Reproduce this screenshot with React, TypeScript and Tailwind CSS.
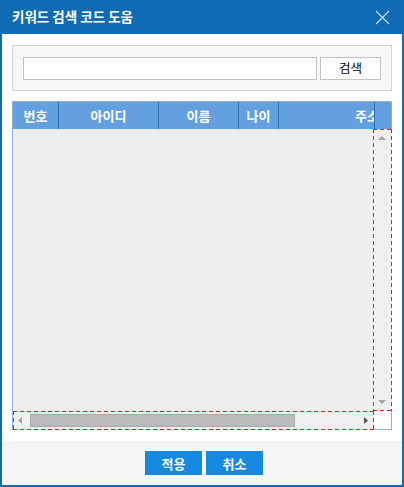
import React from "react";

const font = { fontFamily: '"Noto Sans CJK KR", "Noto Sans", sans-serif' };

const dashed =
  "[background-image:linear-gradient(90deg,#e41b1b_4px,transparent_4px),linear-gradient(90deg,#e41b1b_4px,transparent_4px),linear-gradient(180deg,#e41b1b_4px,transparent_4px),linear-gradient(180deg,#e41b1b_4px,transparent_4px)] [background-size:7px_1px,7px_1px,1px_7px,1px_7px] [background-position:0_0,0_100%,0_0,100%_0] [background-repeat:repeat-x,repeat-x,repeat-y,repeat-y]";

export default function App() {
  return (
    <div
      className="w-[404px] h-[487px] bg-[#0e6bb4] flex flex-col px-[2px] pb-[2px] box-border"
      style={font}
    >
      {/* Title bar */}
      <div className="h-[34px] shrink-0 flex items-center justify-between pl-[10px] pr-[12px]">
        <span className="text-white text-[13.5px] font-bold leading-none">
          키워드 검색 코드 도움
        </span>
        <svg width="15" height="15" viewBox="0 0 15 15" className="block">
          <path d="M1 1 L14 14 M14 1 L1 14" stroke="#c9dcee" strokeWidth="1.2" />
        </svg>
      </div>

      {/* Body */}
      <div className="flex-1 bg-white flex flex-col">
        <div className="flex-1 flex flex-col px-[10px] pt-[11px] pb-[11px] gap-[10px]">
          {/* Search panel */}
          <div className="h-[46px] shrink-0 border border-[#d4d4d4] bg-[#f7f7f7] flex items-center px-[10px] gap-[3px]">
            <input
              className="h-[23px] flex-1 border border-[#c2c2c2] bg-white outline-none px-1 text-[12px]"
              style={font}
            />
            <button
              className="h-[23px] w-[61px] border border-[#c2c2c2] bg-white text-[12.5px] text-black leading-none"
              style={font}
            >
              검색
            </button>
          </div>

          {/* Grid */}
          <div className="flex-1 border border-[#8db3d9] flex flex-col bg-[#eeeeee]">
            {/* Header */}
            <div className="h-[27px] shrink-0 bg-[#64a0e0] flex text-white text-[13px] font-bold">
              <div className="w-[46px] shrink-0 border-r border-[#2a72b4] flex items-center justify-center">번호</div>
              <div className="w-[100px] shrink-0 border-r border-[#2a72b4] flex items-center justify-center">아이디</div>
              <div className="w-[80px] shrink-0 border-r border-[#2a72b4] flex items-center justify-center">이름</div>
              <div className="w-[40px] shrink-0 border-r border-[#2a72b4] flex items-center justify-center">나이</div>
              <div className="flex-1 overflow-hidden flex">
                <div className="w-[176px] shrink-0 flex items-center justify-center">주소</div>
              </div>
              <div className="w-[17px] shrink-0 border-l border-[#2a72b4]" />
            </div>

            {/* Content + vertical scrollbar */}
            <div className="flex-1 flex">
              <div className="flex-1 bg-[#eeeeee]" />
              <div className={`w-[19px] -mr-[1px] shrink-0 bg-[#f0f0f0] flex flex-col items-center justify-between pt-[7px] pb-[7px] pr-[1px] ${dashed}`}>
                <svg width="8" height="4" viewBox="0 0 8 4"><path d="M0 4 L4 0 L8 4 Z" fill="#a6a6a6" /></svg>
                <svg width="8" height="4" viewBox="0 0 8 4"><path d="M0 0 L4 4 L8 0 Z" fill="#a6a6a6" /></svg>
              </div>
            </div>

            {/* Horizontal scrollbar */}
            <div className="h-[19px] -mb-[1px] shrink-0 flex relative">
              <div className={`flex-1 bg-[#f0f0f0] flex items-center pl-[5px] pr-[6px] pb-[1px] ${dashed}`}>
                <svg width="4" height="7" viewBox="0 0 4 7"><path d="M4 0 L0 3.5 L4 7 Z" fill="#a6a6a6" /></svg>
                <div className="ml-[8px] w-[265px] h-[13px] bg-[#bcbcbc] border border-[#a9a9a9]" />
                <div className="flex-1" />
                <svg width="4" height="7" viewBox="0 0 4 7"><path d="M0 0 L4 3.5 L0 7 Z" fill="#555555" /></svg>
              </div>
              <div className="w-[18px] -mr-[1px] shrink-0 bg-white border-r border-b border-[#8db3d9]" />
            </div>
          </div>
        </div>

        {/* Footer */}
        <div className="h-[44px] shrink-0 bg-[#f4f5f5] flex items-center justify-center gap-[4px] pl-[4px]">
          <button
            className="w-[57px] h-[24px] bg-[#1589e0] text-white text-[13px] font-bold leading-none"
            style={font}
          >
            적용
          </button>
          <button
            className="w-[57px] h-[24px] bg-[#1589e0] text-white text-[13px] font-bold leading-none"
            style={font}
          >
            취소
          </button>
        </div>
      </div>
    </div>
  );
}
